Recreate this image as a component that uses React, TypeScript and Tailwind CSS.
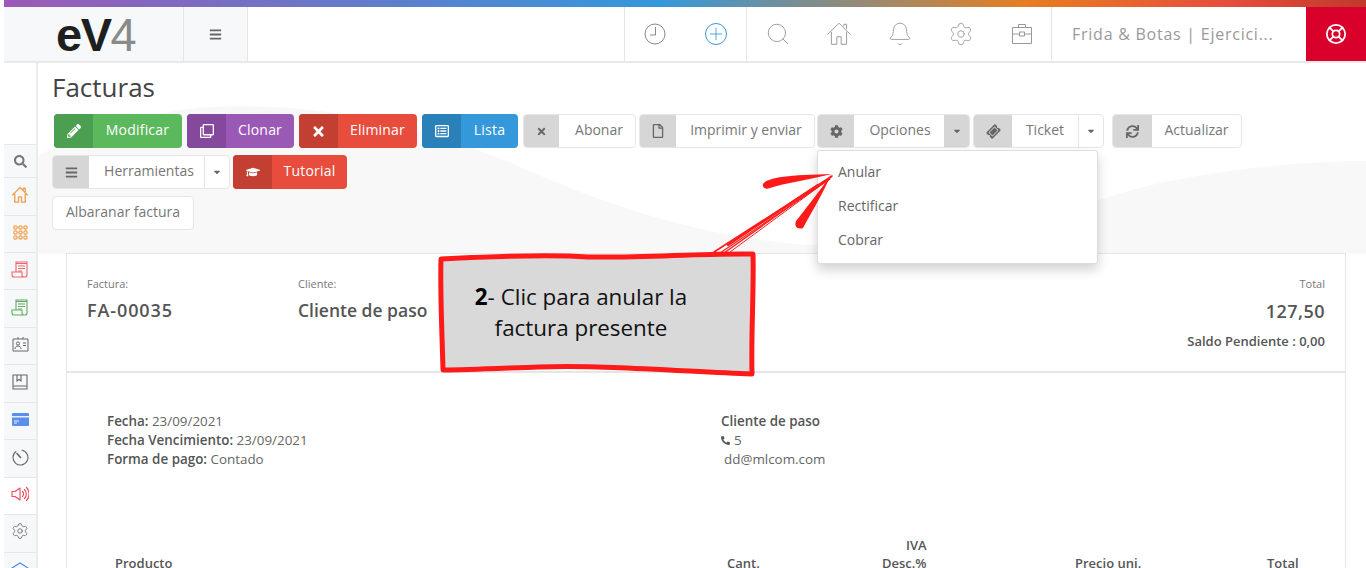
import React from 'react';
import { FaPencilAlt, FaRegClone, FaTimes, FaRegListAlt, FaRegFile, FaCog, FaTicketAlt, FaSync, FaBars, FaGraduationCap, FaCaretDown, FaPhone, FaSearch } from 'react-icons/fa';
import { Bell, LifeBuoy, Search, Settings, Plus } from 'lucide-react';

const colorBtns = [
  { label: 'Modificar', icon: <FaPencilAlt size={14} />, width: 'w-[128px]', main: 'bg-[#5cb85c]', dark: 'bg-[#4c9f50]', ml: 'ml-[2px]' },
  { label: 'Clonar', icon: <FaRegClone size={14} />, width: 'w-[107px]', main: 'bg-[#9b59b6]', dark: 'bg-[#84489c]', ml: 'ml-[5px]' },
  { label: 'Eliminar', icon: <FaTimes size={15} />, width: 'w-[118px]', main: 'bg-[#e74c3c]', dark: 'bg-[#c23f31]', ml: 'ml-[5px]' },
  { label: 'Lista', icon: <FaRegListAlt size={14} />, width: 'w-[96px]', main: 'bg-[#3498db]', dark: 'bg-[#2a80b9]', ml: 'ml-[5px]' },
];

const WhiteBtn = ({ icon, label, width, iconW, ml, caret, caretDark, textPad = '' }: { icon: React.ReactNode; label: string; width: string; iconW: string; ml: string; caret?: boolean; caretDark?: boolean; textPad?: string }) => (
  <div className={`${width} ${ml} h-[34px] flex rounded-[4px] border border-[#e6e6e6] bg-white overflow-hidden text-[14px] text-[#777]`}>
    <div className={`${iconW} shrink-0 bg-[#d6d6d6] flex items-center justify-center text-[#666]`}>{icon}</div>
    <div className={`flex-1 flex items-center justify-center pb-[3px] whitespace-nowrap ${textPad}`}>{label}</div>
    {caret && (
      <div className={`w-[25px] shrink-0 flex items-center justify-center text-[#666] ${caretDark ? 'bg-[#d6d6d6]' : 'border-l border-[#e6e6e6]'}`}>
        <FaCaretDown size={10} />
      </div>
    )}
  </div>
);

const ScrollIcon = ({ color }: { color: string }) => (
  <svg width="18" height="18" viewBox="0 0 18 18" fill="none" stroke={color} strokeWidth="1.1">
    <path d="M5 12V2h11v13a2 2 0 0 1-2 2H3a2 2 0 0 1-2-2v-3h10v3a2 2 0 0 0 2 2" />
    <path d="M5 3.5h11M7 6h7M7 8.5h7M7 11h4" />
  </svg>
);

const HomeIcon = ({ color, size, sw }: { color: string; size: number; sw: number }) => (
  <svg width={size} height={size} viewBox="0 0 24 24" fill="none" stroke={color} strokeWidth={sw} strokeLinejoin="round">
    <path d="M1.5 12.5 12 2l10.5 10.5M5 10v11.5h5v-7h4v7h5V10M16.5 5V3H19v4.5" />
  </svg>
);

const sideItems = [
  { icon: <FaSearch size={13} className="text-[#777]" />, h: 'h-[33px]' },
  { icon: <HomeIcon color="#f0a050" size={18} sw={1.8} />, h: 'h-[38px] pb-[4px]' },
  {
    icon: (
      <svg width="15" height="15" viewBox="0 0 15 15" fill="none" stroke="#f0a050" strokeWidth="1.2">
        {[2.5, 7.5, 12.5].map((y) => [2.5, 7.5, 12.5].map((x) => <circle key={`${x}-${y}`} cx={x} cy={y} r="1.7" />))}
      </svg>
    ),
    h: 'h-[37px] pb-[4px]',
  },
  { icon: <ScrollIcon color="#f0666f" />, h: 'h-[37px] pb-[4px]' },
  { icon: <ScrollIcon color="#5fae5f" />, h: 'h-[38px] pb-[4px]' },
  {
    icon: (
      <svg width="17" height="17" viewBox="0 0 17 17" fill="none" stroke="#666" strokeWidth="1">
        <path d="M1 3h15v12H1zM6 3V1M11 3V1" />
        <circle cx="6" cy="7.5" r="1.6" />
        <path d="M3 13c0-4 6-4 6 0M11 7h3M11 9.5h3" />
      </svg>
    ),
    h: 'h-[37px] pb-[4px]',
  },
  {
    icon: (
      <svg width="16" height="16" viewBox="0 0 16 16" fill="none" stroke="#666" strokeWidth="1.1">
        <path d="M1 1h14v14H1zM1 12h14M5 1v6l2-1.5L9 7V1" />
      </svg>
    ),
    h: 'h-[38px] pb-[4px]',
  },
  {
    icon: (
      <svg width="17" height="13" viewBox="0 0 17 13">
        <rect width="17" height="13" rx="1" fill="#5a90ea" />
        <rect x="0" y="3" width="17" height="1.5" fill="#e8f0fd" />
        <path d="M2 8h5M2 10h3" stroke="#e8f0fd" />
      </svg>
    ),
    h: 'h-[37px] pb-[4px]',
  },
  {
    icon: (
      <svg width="17" height="17" viewBox="0 0 17 17" fill="none" stroke="#666" strokeWidth="1.1" strokeLinecap="round">
        <path d="M10 1.2A7.5 7.5 0 1 1 4 2.5" />
        <path d="M5 4.5 8.5 8.5" strokeWidth="1.6" />
      </svg>
    ),
    h: 'h-[38px] pb-[2px]',
  },
  {
    icon: (
      <svg width="18" height="16" viewBox="0 0 18 16" fill="none" stroke="#f0485a" strokeWidth="1.1" strokeLinecap="round" strokeLinejoin="round">
        <path d="M1 5.5h3L9 2v12L4 10.5H1zM11.5 5.5a3.5 3.5 0 0 1 0 5M13.5 3.5a6.5 6.5 0 0 1 0 9M15.5 1.5a9.5 9.5 0 0 1 0 13" />
      </svg>
    ),
    h: 'h-[37px] pb-[4px]',
    white: true,
  },
  { icon: <Settings size={18} strokeWidth={1.1} className="text-[#666]" />, h: 'h-[38px] pb-[6px]' },
];

export default function App() {
  return (
    <div className="h-[568px] overflow-hidden bg-white pl-[4px] flex flex-col relative font-['Open_Sans','Noto_Sans',sans-serif]">
      <div className="h-[7px] shrink-0 bg-[linear-gradient(to_right,#9b59b6_0%,#3498db_48%,#e67e22_75%,#e74c3c_90%,#c0392b_100%)]" />

      {/* Top bar */}
      <header className="h-[56px] shrink-0 flex border-b-2 border-[#e9e9e9] bg-white">
        <div className="w-[180px] bg-[#f7f8fa] border-r border-[#e6e6e6] flex items-center pl-[52px]">
          <span className="font-['Liberation_Sans',sans-serif] text-[47px] leading-none tracking-[-1.5px] font-bold text-[#1f1f1f]">eV<span className="font-normal text-[#8a8a8a]">4</span></span>
        </div>
        <div className="w-[64px] bg-[#f7f8fa] border-r border-[#e6e6e6] flex items-center justify-center text-[#666]">
          <FaBars size={13} />
        </div>
        <div className="flex-1" />
        <div className="w-[122px] border-l border-[#e6e6e6] flex items-center gap-[39px] pl-[19px]">
          <svg width="22" height="22" viewBox="0 0 22 22" fill="none" stroke="#888" strokeWidth="1">
            <circle cx="11" cy="11" r="10" />
            <path d="M11.5 4v8H6" />
          </svg>
          <div className="w-[22px] h-[22px] rounded-full border border-[#3498db] flex items-center justify-center text-[#3498db]">
            <Plus size={20} strokeWidth={1} />
          </div>
        </div>
        <div className="w-[305px] border-l border-[#e6e6e6] flex items-center gap-[35px] pl-[18px] text-[#999]">
          <Search size={26} strokeWidth={0.85} />
          <HomeIcon color="#999" size={26} sw={0.9} />
          <Bell size={26} strokeWidth={0.85} />
          <Settings size={26} strokeWidth={0.8} />
          <svg width="26" height="26" viewBox="0 0 26 26" fill="none" stroke="#999" strokeWidth="1">
            <path d="M3.5 6.5h19v16h-19zM9.5 6.5v-3h7v3M3.5 13h7M15.5 13h7M10.5 11h5v4h-5z" />
          </svg>
        </div>
        <div className="w-[255px] border-l border-[#e6e6e6] flex items-center pl-[20px] text-[16px] tracking-[0.75px] text-[#999] whitespace-nowrap">
          Frida &amp; Botas | Ejercici...
        </div>
        <div className="w-[60px] bg-[#d9002c] flex items-center justify-center text-white">
          <LifeBuoy size={22} strokeWidth={1.9} />
        </div>
      </header>

      <div className="flex-1 flex min-h-0">
        {/* Sidebar */}
        <aside className="w-[34px] shrink-0 border-r-2 border-[#ececec] pt-[81px]">
          {sideItems.map((item, i) => (
            <div key={i} className={`${item.h} flex items-center justify-center border-t border-[#e6e6e6] ${item.white ? 'bg-white' : 'bg-[#f7f8fa]'}`}>
              {item.icon}
            </div>
          ))}
          <div className="h-[37px] flex items-start justify-center border-t border-[#e6e6e6] bg-[#f7f8fa] pt-[6px]">
            <svg width="18" height="18" viewBox="0 0 18 18" fill="none" stroke="#4d8ae8" strokeWidth="1.2"><path d="M1 9 9 4l8 5-8 5z" /></svg>
          </div>
        </aside>

        {/* Main */}
        <main className="flex-1 min-w-0 relative pl-[14px]">
          <svg className="absolute left-0 top-0 w-[1328px] h-[191px]" viewBox="0 0 1328 191" fill="none">
            <path d="M0 93C60 58 140 43 200 43 320 43 410 73 480 103 580 148 680 178 790 183 910 183 1010 153 1090 128 1160 108 1260 98 1328 98V191H0Z" fill="#f8f8f8" />
          </svg>

          <div className="relative">
            <h1 className="h-[51px] pt-[7px] text-[26px] leading-[35px] font-normal text-[#444]">Facturas</h1>

            <div className="flex h-[34px]">
              {colorBtns.map((b) => (
                <div key={b.label} className={`${b.width} ${b.ml} ${b.main} flex rounded-[4px] overflow-hidden text-[14px] font-medium tracking-[0.2px] text-white`}>
                  <div className={`w-[39px] shrink-0 ${b.dark} flex items-center justify-center`}>{b.icon}</div>
                  <div className="flex-1 flex items-center justify-center pb-[3px]">{b.label}</div>
                </div>
              ))}
              <WhiteBtn icon={<FaTimes size={11} />} label="Abonar" width="w-[113px]" iconW="w-[35px]" ml="ml-[5px]" textPad="pl-[4px]" />
              <WhiteBtn icon={<FaRegFile size={14} />} label="Imprimir y enviar" width="w-[176px]" iconW="w-[36px]" ml="ml-[3px]" textPad="pl-[2px]" />
              <WhiteBtn icon={<FaCog size={13} />} label="Opciones" width="w-[153px]" iconW="w-[36px]" ml="ml-[2px]" caret caretDark textPad="pl-[2px]" />
              <WhiteBtn icon={<FaTicketAlt size={13} className="-rotate-45" />} label="Ticket" width="w-[131px]" iconW="w-[38px]" ml="ml-[3px]" caret />
              <WhiteBtn icon={<FaSync size={13} />} label="Actualizar" width="w-[130px]" iconW="w-[39px]" ml="ml-[8px]" />
            </div>

            <div className="flex mt-[7px] h-[34px]">
              <WhiteBtn icon={<FaBars size={13} />} label="Herramientas" width="w-[178px]" iconW="w-[36px]" ml="" caret textPad="pl-[5px]" />
              <div className="w-[114px] ml-[3px] bg-[#e74c3c] flex rounded-[4px] overflow-hidden text-[14px] font-medium tracking-[0.2px] text-white">
                <div className="w-[39px] shrink-0 bg-[#c23f31] flex items-center justify-center"><FaGraduationCap size={14} /></div>
                <div className="flex-1 flex items-center justify-center pb-[3px]">Tutorial</div>
              </div>
            </div>

            <div className="mt-[7px] w-[142px] h-[34px] rounded-[4px] border border-[#e6e6e6] bg-white flex items-center justify-center pb-[3px] text-[14px] text-[#777]">
              Albaranar factura
            </div>

            {/* Invoice head */}
            <section className="mt-[23px] ml-[14px] mr-[20px] h-[120px] bg-white border border-[#e6e6e6] border-b-2 flex pl-[20px] pr-[20px] pt-[22px] text-[#555]">
              <div className="w-[211px]">
                <div className="text-[11px] leading-[15px] text-[#777]">Factura:</div>
                <div className="mt-[7px] text-[18px] leading-[25px] font-semibold tracking-[0.9px]">FA-00035</div>
              </div>
              <div className="flex-1">
                <div className="text-[11px] leading-[15px] text-[#777]">Cliente:</div>
                <div className="mt-[7px] text-[17.5px] leading-[25px] font-semibold">Cliente de paso</div>
              </div>
              <div className="text-right">
                <div className="text-[11px] leading-[15px] text-[#777]">Total</div>
                <div className="mt-[8px] text-[18px] leading-[25px] font-semibold tracking-[0.5px]">127,50</div>
                <div className="mt-[8px] text-[13px] leading-[18px] font-semibold">Saldo Pendiente : 0,00</div>
              </div>
            </section>

            {/* Invoice body */}
            <section className="ml-[14px] mr-[20px] h-[300px] bg-white border-x border-[#e6e6e6] relative text-[13.4px] leading-[19px] text-[#666]">
              <div className="flex pl-[40px] pt-[39px]">
                <div className="w-[614px]">
                  <div><b className="font-semibold text-[#555]">Fecha:</b> 23/09/2021</div>
                  <div><b className="font-semibold text-[#555]">Fecha Vencimiento:</b> 23/09/2021</div>
                  <div><b className="font-semibold text-[#555]">Forma de pago:</b> Contado</div>
                </div>
                <div>
                  <div className="font-semibold text-[#555]">Cliente de paso</div>
                  <div className="flex items-center gap-[4px]"><FaPhone size={9} className="-scale-x-100 text-[#555]" />5</div>
                  <div className="pl-[3px]">dd@mlcom.com</div>
                </div>
              </div>
              <div className="flex items-end mt-[67px] pl-[48px] font-semibold text-[13px] text-[#555] leading-[18px]">
                <div className="w-[612px]">Producto</div>
                <div className="w-[155px]">Cant.</div>
                <div className="w-[193px]"><div className="w-fit text-right">IVA<div>Desc.%</div></div></div>
                <div className="w-[192px]">Precio uni.</div>
                <div>Total</div>
              </div>
            </section>
          </div>
        </main>
      </div>

      {/* Opciones dropdown */}
      <div className="absolute left-[817px] top-[150px] w-[281px] h-[114px] bg-white border border-[#ddd] rounded-[3px] shadow-[0_6px_12px_rgba(0,0,0,0.18)] py-[3px] text-[14px] text-[#666]">
        <div className="h-[34px] flex items-center pl-[20px]">Anular</div>
        <div className="h-[34px] flex items-center pl-[20px]">Rectificar</div>
        <div className="h-[34px] flex items-center pl-[20px]">Cobrar</div>
      </div>

      {/* Annotation arrow */}
      <svg className="absolute left-[700px] top-[165px] w-[140px] h-[95px]" viewBox="0 0 140 95" fill="none" strokeLinecap="round">
        <path d="M14 87 132 11" stroke="#ff1a1a" strokeWidth="1.6" />
        <path d="M20 88 130 14" stroke="#ff1a1a" strokeWidth="1.2" />
        <path d="M24 88 131 12" stroke="#ff1a1a" strokeWidth="1.4" />
        <path d="M30 87 128 15" stroke="#ff1a1a" strokeWidth="1" />
        <path d="M28 80 118 20" stroke="#ff1a1a" strokeWidth="2.2" />
        <path d="M63 19C68 12 90 10 132 9 108 15 85 18 70 23 65 25 62 22 63 19Z" fill="#ff1a1a" />
        <path d="M131 10C122 30 110 50 103 63 97 65 94 61 96 56 105 45 120 25 131 10Z" fill="#ff1a1a" />
      </svg>

      {/* Annotation callout */}
      <div className="absolute left-[438px] top-[251px] w-[318px] h-[126px]">
        <svg className="absolute inset-0 w-full h-full" viewBox="0 0 318 126" fill="#d9d9d9" stroke="#ff1a1a" strokeWidth="5" strokeLinejoin="round">
          <path d="M3 8C60 5 110 3 150 6 210 7 260 2 315 3 316 40 313 80 314 123 240 120 170 114 100 116 70 117 30 119 5 119 4 80 2 40 3 8Z" />
        </svg>
        <div className="relative pt-[30px] pr-[32px] pl-[0px] text-center text-[22.4px] leading-[31px] text-[#111]">
          <div><b className="font-bold text-black">2</b>- Clic para anular la</div>
          <div>factura presente</div>
        </div>
      </div>
    </div>
  );
}
